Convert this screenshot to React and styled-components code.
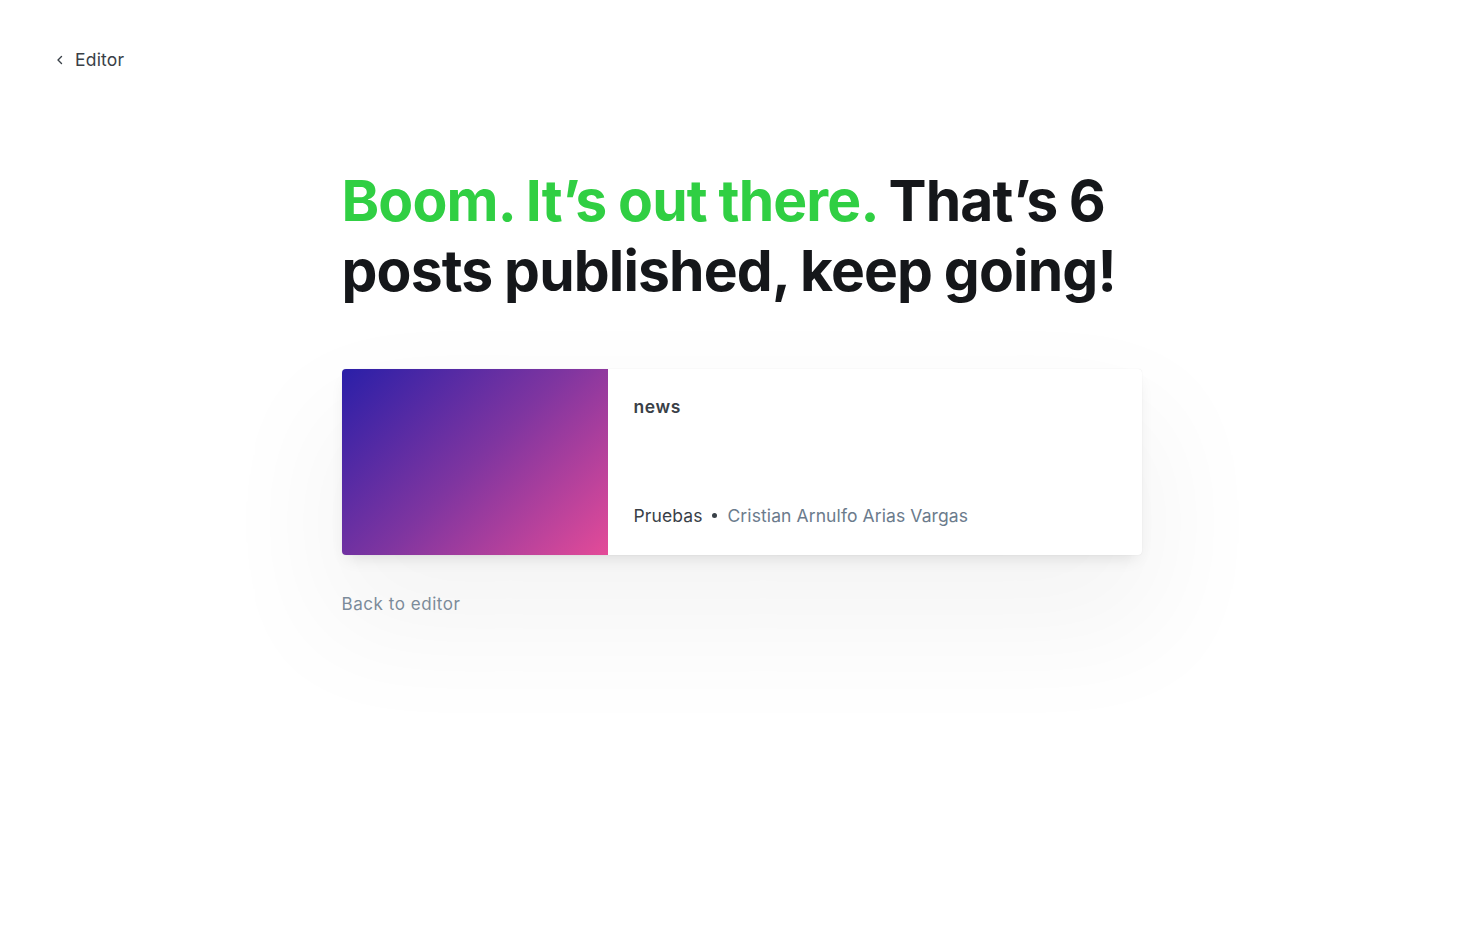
import React from "react";
import styled, { createGlobalStyle } from "styled-components";

const Global = createGlobalStyle`
  html, body { margin: 0; padding: 0; background: #fff; }
  body { font-family: Inter, "Noto Sans", sans-serif; -webkit-font-smoothing: antialiased; }
`;

const Page = styled.div`
  min-height: 931px;
  display: flex;
  flex-direction: column;
`;

const TopBar = styled.div`
  display: flex;
  align-items: center;
  padding: 48px 0 0 54px;
  height: 22px;
`;

const BackLink = styled.a`
  display: flex;
  align-items: center;
  gap: 9px;
  font-size: 17.5px;
  color: #394047;
  text-decoration: none;
  letter-spacing: 0.2px;
  svg { width: 12px; height: 12px; margin-top: 1px; }
`;

const Main = styled.main`
  width: 800px;
  margin: 0 auto;
  padding-top: 96px;
`;

const Title = styled.h1`
  margin: 0;
  font-size: 57px;
  line-height: 70px;
  font-weight: 700;
  letter-spacing: -0.015em;
  word-spacing: -1px;
  color: #15171a;
`;

const Green = styled.span`
  color: #30cf43;
`;

const Card = styled.div`
  margin-top: 63px;
  display: flex;
  height: 186px;
  background: #fff;
  border-radius: 4px;
  overflow: hidden;
  box-shadow:
    0 0 1px rgba(0, 0, 0, 0.12),
    0 8px 16px -6px rgba(0, 0, 0, 0.12),
    0 60px 120px 20px rgba(0, 0, 0, 0.045);
`;

const Cover = styled.div`
  flex: 0 0 266px;
  background: linear-gradient(135deg, #2a1fa8 0%, #7f35a0 50%, #e44b98 100%);
`;

const Body = styled.div`
  flex: 1;
  display: flex;
  flex-direction: column;
  justify-content: space-between;
  padding: 27px 26px 29px 26px;
`;

const PostTitle = styled.div`
  font-size: 17.5px;
  font-weight: 600;
  color: #394047;
  letter-spacing: 0.6px;
`;

const Meta = styled.div`
  display: flex;
  align-items: center;
  font-size: 17.5px;
  color: #394047;
  letter-spacing: 0.1px;
`;

const Dot = styled.span`
  width: 5px;
  height: 5px;
  border-radius: 50%;
  background: #394047;
  margin: 0 10px;
`;

const Author = styled.span`
  color: #6b7b8c;
`;

const BackEditor = styled.a`
  display: inline-block;
  margin-top: 39px;
  font-size: 17px;
  color: #7c8b9a;
  letter-spacing: 0.55px;
  text-decoration: none;
`;

export default function App() {
  return (
    <Page>
      <Global />
      <TopBar>
        <BackLink href="#">
          <svg viewBox="0 0 12 12" fill="none" stroke="#394047" strokeWidth="1.4" strokeLinecap="round" strokeLinejoin="round">
            <path d="M7.5 2.5 4 6l3.5 3.5" />
          </svg>
          Editor
        </BackLink>
      </TopBar>
      <Main>
        <Title>
          <Green>Boom. It’s out there.</Green> That’s 6 posts published, keep going!
        </Title>
        <Card>
          <Cover />
          <Body>
            <PostTitle>news</PostTitle>
            <Meta>
              Pruebas
              <Dot />
              <Author>Cristian Arnulfo Arias Vargas</Author>
            </Meta>
          </Body>
        </Card>
        <BackEditor href="#">Back to editor</BackEditor>
      </Main>
    </Page>
  );
}
